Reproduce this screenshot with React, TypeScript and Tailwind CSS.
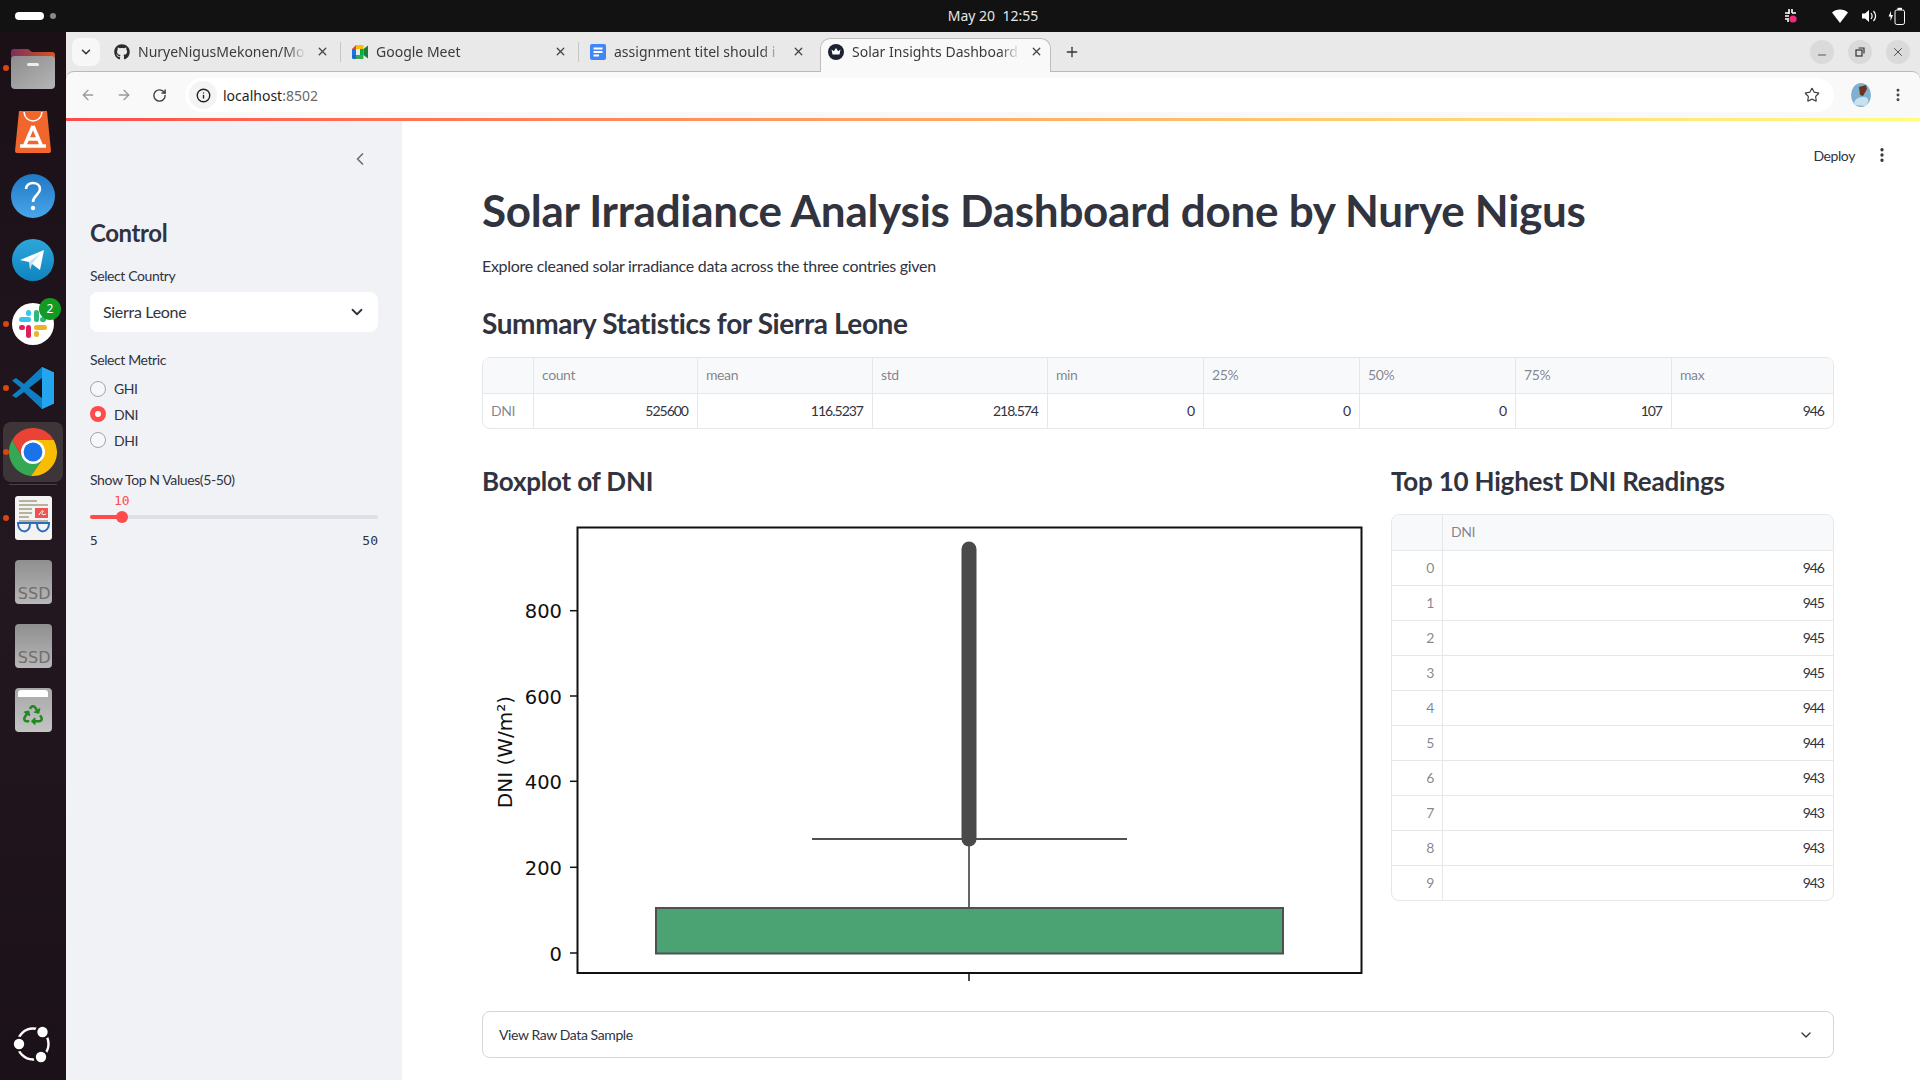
import { ReactNode } from "react";
import { ArrowLeft, ArrowRight, ChevronDown, ChevronLeft, EllipsisVertical, Info, Minus, Plus, RotateCw, Star, X } from "lucide-react";
import { FaGithub, FaRecycle } from "react-icons/fa";

const statCols = [
  { name: "count", value: "525600" },
  { name: "mean", value: "116.5237" },
  { name: "std", value: "218.574" },
  { name: "min", value: "0" },
  { name: "25%", value: "0" },
  { name: "50%", value: "0" },
  { name: "75%", value: "107" },
  { name: "max", value: "946" },
];
const topValues = [946, 945, 945, 945, 944, 944, 943, 943, 943, 943];
const yTicks = [
  { label: "800", y: 100.7, base: 107.7 },
  { label: "600", y: 186, base: 194 },
  { label: "400", y: 271.3, base: 279.3 },
  { label: "200", y: 357.3, base: 365.3 },
  { label: "0", y: 443, base: 451 },
];

const MeetIcon = () => (
  <svg width="16" height="16" viewBox="0 0 16 16">
    <path d="M0 5 L4 1 H4 V5Z" fill="#ea4335" />
    <path d="M4 1 H10.5 a1 1 0 0 1 1 1 V5 H4Z" fill="#fbbc04" />
    <path d="M0 5 H4 V11 H0Z" fill="#1a73e8" />
    <path d="M0 11 H4 V15 H1.5 a1.5 1.5 0 0 1 -1.5 -1.5Z" fill="#1967d2" />
    <path d="M4 11 H11.5 V14 a1 1 0 0 1 -1 1 H4Z" fill="#34a853" />
    <path d="M11.5 5 V11 L16 14.5 V1.5Z" fill="#188038" />
    <path d="M8 5 h3.5 v6 h-3.5z" fill="#00ac47" />
  </svg>
);
const DocsIcon = () => (
  <svg width="16" height="16" viewBox="0 0 16 16">
    <rect width="16" height="16" rx="2" fill="#4285f4" />
    <path d="M3.5 4.5h9M3.5 8h9M3.5 11.5h5.5" stroke="#fff" strokeWidth="1.8" />
  </svg>
);
const CrownIcon = () => (
  <svg width="16" height="16" viewBox="0 0 16 16">
    <circle cx="8" cy="8" r="8" fill="#1d2233" />
    <path d="M3.5 5.5 L5.8 7.2 L8 4 L10.2 7.2 L12.5 5.5 L11.5 10.5 H4.5Z" fill="#fff" />
  </svg>
);
const Chrome = ({ size }: { size: number }) => (
  <svg width={size} height={size} viewBox="0 0 48 48">
    <path d="M3.2 12 A24 24 0 0 1 44.8 12 L24 12 L13.6 30Z" fill="#ea4335" />
    <path d="M3.2 12 A24 24 0 0 0 22 47.9 L34.4 30 H13.6Z" fill="#34a853" />
    <path d="M44.8 12 A24 24 0 0 1 22 47.9 L34.4 30 L24 12Z" fill="#fbbc04" />
    <circle cx="24" cy="24" r="12" fill="#fff" />
    <circle cx="24" cy="24" r="9.4" fill="#1a73e8" />
  </svg>
);
const FolderIcon = () => (
  <svg width="44" height="41" viewBox="0 0 44 41">
    <defs>
      <linearGradient id="folderTop" x1="0" x2="1" y1="0" y2="0">
        <stop offset="0" stopColor="#7b2f5e" />
        <stop offset="1" stopColor="#d9541e" />
      </linearGradient>
      <linearGradient id="folderBody" x1="0" x2="1" y1="0" y2="1">
        <stop offset="0" stopColor="#8d8d8d" />
        <stop offset="1" stopColor="#b5b5b5" />
      </linearGradient>
    </defs>
    <path d="M3 1 H17 L21 4 H41 a3 3 0 0 1 3 3 V16 H0 V4 a3 3 0 0 1 3 -3Z" fill="url(#folderTop)" />
    <rect y="8" width="44" height="33" rx="4" fill="url(#folderBody)" />
    <rect x="16" y="15" width="12" height="3" rx="1.5" fill="#eee" />
  </svg>
);
const StoreIcon = () => (
  <svg width="36" height="42" viewBox="0 0 36 42">
    <path d="M4 0 H32 L36 40 a2 2 0 0 1 -2 2 H2 a2 2 0 0 1 -2 -2Z" fill="#f0662c" />
    <path d="M9 1 C10 13 26 13 27 1" fill="none" stroke="#fff" strokeWidth="1.6" />
    <path d="M18 15 L9 36 M18 15 L27 36 M5 35 H31 M11 28 H25" stroke="#fff" strokeWidth="3.4" fill="none" />
  </svg>
);
const HelpIcon = () => (
  <svg width="44" height="44" viewBox="0 0 44 44">
    <defs>
      <linearGradient id="helpFill" x1="0" x2="0" y1="0" y2="1">
        <stop offset="0" stopColor="#1f78c4" />
        <stop offset="1" stopColor="#4aa6ea" />
      </linearGradient>
    </defs>
    <circle cx="22" cy="22" r="22" fill="url(#helpFill)" />
    <path d="M15 15 C15 7 29 7 29 15 C29 21 22 21 22 28" fill="none" stroke="#fff" strokeWidth="2.6" />
    <circle cx="22" cy="34" r="2.2" fill="#fff" />
  </svg>
);
const TelegramIcon = () => (
  <svg width="42" height="42" viewBox="0 0 42 42">
    <defs>
      <linearGradient id="tgFill" x1="0" x2="0" y1="0" y2="1">
        <stop offset="0" stopColor="#2ea6da" />
        <stop offset="1" stopColor="#0f84c0" />
      </linearGradient>
    </defs>
    <circle cx="21" cy="21" r="21" fill="url(#tgFill)" />
    <path d="M8 21 L32 11 L28 31 L20 25 L17 23Z" fill="#fff" />
    <path d="M17 23 L29 14 L20 25 L18 31Z" fill="#cfe3ef" />
  </svg>
);
const SlackIcon = () => (
  <svg width="42" height="42" viewBox="0 0 42 42">
    <circle cx="21" cy="21" r="21" fill="#fff" />
    <rect x="7" y="14" width="12" height="5" rx="2.5" fill="#36c5f0" />
    <rect x="14" y="7" width="5" height="6" rx="2.5" fill="#36c5f0" />
    <rect x="22" y="7" width="5" height="12" rx="2.5" fill="#2eb67d" />
    <rect x="28" y="14" width="6" height="5" rx="2.5" fill="#2eb67d" />
    <rect x="22" y="22" width="13" height="5" rx="2.5" fill="#ecb22e" />
    <rect x="22" y="28" width="5" height="6" rx="2.5" fill="#ecb22e" />
    <rect x="14" y="22" width="5" height="13" rx="2.5" fill="#e01e5a" />
    <rect x="7" y="22" width="6" height="5" rx="2.5" fill="#e01e5a" />
  </svg>
);
const VsCodeIcon = () => (
  <svg width="42" height="42" viewBox="0 0 42 42">
    <path d="M30 0 L42 5.5 V36.5 L30 42 L12 25 L4 31 L0 28.5 L9 21 L0 13.5 L4 11 L12 17Z" fill="#0f7fc4" />
    <path d="M30 0 L42 5.5 V36.5 L30 42Z" fill="#23a5ef" />
    <path d="M30 11 V31 L17 21Z" fill="#1a1016" />
  </svg>
);
const ReaderIcon = () => (
  <svg width="37" height="44" viewBox="0 0 37 44">
    <rect width="37" height="44" rx="3" fill="#f3f3f3" />
    <path d="M4 5 H22 M4 9 H33 M4 13 H17 M4 17 H17 M4 21 H14 M4 25 H33" stroke="#b8b1a0" strokeWidth="2" />
    <rect x="20" y="12" width="13" height="10" fill="#ef5350" />
    <path d="M24 19 C27 13 30 14 27 17 C26 19 29 19 31 18" stroke="#fff" fill="none" />
    <path d="M2 27 H35 M3 27 C3 38 15 38 15 28 M22 28 C22 38 34 38 34 27" stroke="#2a6bbd" strokeWidth="2" fill="none" />
  </svg>
);
const UbuntuIcon = () => (
  <svg width="40" height="40" viewBox="0 0 40 40">
    <circle cx="20" cy="20" r="15.5" fill="none" stroke="#fff" strokeWidth="2.4" />
    <circle cx="29.5" cy="8" r="7.5" fill="#1b1118" />
    <circle cx="5" cy="20" r="7.5" fill="#1b1118" />
    <circle cx="28" cy="33" r="7.5" fill="#1b1118" />
    <circle cx="29.5" cy="8" r="5.2" fill="#fff" />
    <circle cx="6" cy="20" r="5.2" fill="#fff" />
    <circle cx="28" cy="33" r="5.2" fill="#fff" />
  </svg>
);
const SlackTrayIcon = () => (
  <svg width="14" height="16" viewBox="0 0 14 16">
    <path d="M5 1v5M1 5h4M8 1v4M1 8h4M8 5h4M4 10v4M1 11h2" stroke="#fff" strokeWidth="1.6" />
    <circle cx="9" cy="11" r="3.6" fill="#ee2a7b" />
  </svg>
);
const WifiIcon = () => (
  <svg width="16" height="14" viewBox="0 0 16 14">
    <path d="M0 3.5 C4 -0.5 12 -0.5 16 3.5 L8 14Z" fill="#fff" />
  </svg>
);
const VolumeIcon = () => (
  <svg width="16" height="14" viewBox="0 0 16 14">
    <path d="M1 4.5 H4 L8 1 V13 L4 9.5 H1Z" fill="#fff" />
    <path d="M10 4 C11.5 6 11.5 8 10 10 M12.5 2 C15 5 15 9 12.5 12" stroke="#fff" fill="none" strokeWidth="1.2" />
  </svg>
);
const BatteryIcon = () => (
  <svg width="17" height="18" viewBox="0 0 17 18">
    <path d="M3 4 L0.5 9.5 H2.5 V14 L5 8 H3Z" fill="#fff" />
    <rect x="7" y="3" width="9.5" height="14.5" rx="1.8" fill="none" stroke="#fff" />
    <rect x="9.5" y="0.8" width="4.5" height="2" fill="#fff" />
  </svg>
);
const Avatar = () => (
  <svg width="20" height="24" viewBox="0 0 20 24">
    <ellipse cx="10" cy="12" rx="10" ry="12" fill="#7fb0cf" />
    <path d="M3 22 C3 15 8 14 14 14 C18 15 18 19 15 23Z" fill="#c9e1ee" />
    <path d="M8 4 L15 2 L16 6 L12 13 L9 12Z" fill="#6a3422" />
  </svg>
);

const Dot = () => <span className="absolute left-[3px] top-1/2 -mt-[3px] h-[6px] w-[6px] rounded-full bg-[#d8470f]" />;

const DockSlot = ({ children, running }: { children: ReactNode; running?: boolean }) => (
  <div className="relative flex h-16 w-full items-center justify-center">
    {running && <Dot />}
    {children}
  </div>
);

const SsdIcon = () => (
  <div className="flex h-11 w-[37px] items-end justify-end overflow-hidden rounded-[4px] bg-gradient-to-b from-[#8f8f8f] to-[#b8b8b8] pr-px">
    <span className="text-[16px] leading-[20px] text-[#6f6f6f] font-['DejaVu_Sans',sans-serif]">SSD</span>
  </div>
);

const Dock = () => (
  <div className="flex w-[66px] shrink-0 flex-col items-center bg-gradient-to-b from-[#1a1016] via-[#231720] to-[#1b1118] pt-1">
    <DockSlot running>
      <FolderIcon />
    </DockSlot>
    <DockSlot>
      <StoreIcon />
    </DockSlot>
    <DockSlot>
      <HelpIcon />
    </DockSlot>
    <DockSlot>
      <TelegramIcon />
    </DockSlot>
    <DockSlot running>
      <SlackIcon />
      <span className="absolute right-[5px] top-[6px] flex h-[22px] w-[22px] items-center justify-center rounded-full bg-[#129a22] text-[12px] text-white">
        2
      </span>
    </DockSlot>
    <DockSlot running>
      <VsCodeIcon />
    </DockSlot>
    <DockSlot running>
      <div className="flex h-[60px] w-[60px] items-center justify-center rounded-lg bg-[#3e3539]">
        <Chrome size={48} />
      </div>
    </DockSlot>
    <div className="my-0 h-px w-12 bg-[#4a4045]" />
    <div className="h-px" />
    <DockSlot running>
      <ReaderIcon />
    </DockSlot>
    <DockSlot>
      <SsdIcon />
    </DockSlot>
    <DockSlot>
      <SsdIcon />
    </DockSlot>
    <DockSlot>
      <div className="flex h-11 w-[37px] flex-col items-center rounded-[4px] bg-gradient-to-b from-[#a8a8a8] to-[#c4c4c4]">
        <div className="mt-[2px] h-[7px] w-[30px] rounded-t-[3px] bg-white" />
        <FaRecycle className="mt-[8px] text-[#1f8a1f]" size={20} />
      </div>
    </DockSlot>
    <div className="mt-auto mb-1">
      <DockSlot>
        <UbuntuIcon />
      </DockSlot>
    </div>
  </div>
);

const Tab = ({ icon, title, active, sep }: { icon: ReactNode; title: string; active?: boolean; sep?: boolean }) => (
  <div className="relative flex h-[34px] w-[238px] shrink-0 items-center pb-[7px] pl-[11px]">
    {active && (
      <div className="absolute bottom-0 left-[3px] right-[4px] top-0 z-0 rounded-t-[10px] border border-b-0 border-[#bdbdbd] bg-[#f9f9f9]" />
    )}
    <div className="z-10 flex h-4 w-4 shrink-0 items-center justify-center">{icon}</div>
    <div className="z-10 ml-2 w-[168px] overflow-hidden whitespace-nowrap text-[14px] text-[#3b3b3b] [mask-image:linear-gradient(to_right,black_88%,transparent)]">
      {title}
    </div>
    <X size={13} strokeWidth={2.4} className="z-10 ml-[10px] shrink-0 text-[#444]" />
    {sep && <div className="absolute right-0 top-[4px] h-5 w-px bg-[#c6c6c6]" />}
  </div>
);

const WinButton = ({ children }: { children: ReactNode }) => (
  <div className="flex h-6 w-6 items-center justify-center rounded-full bg-[#dadada] text-[#333]">{children}</div>
);

const Browser = () => (
  <div className="flex flex-1 flex-col overflow-hidden bg-[#e9e9e9]">
    <div className="flex h-[39px] shrink-0 pt-[6px]">
      <div className="ml-[6px] flex h-7 w-7 items-center justify-center rounded-lg bg-[#f7f7f7]">
        <ChevronDown size={14} strokeWidth={2.6} className="text-[#333]" />
      </div>
      <div className="ml-[3px] flex h-[34px]">
        <Tab icon={<FaGithub size={16} className="text-[#2b2b2b]" />} title="NuryeNigusMekonen/Mo" sep />
        <Tab icon={<MeetIcon />} title="Google Meet" sep />
        <Tab icon={<DocsIcon />} title="assignment titel should i" />
        <div className="z-10">
          <Tab icon={<CrownIcon />} title="Solar Insights Dashboard" active />
        </div>
      </div>
      <Plus size={16} strokeWidth={2} className="ml-[9px] mt-[6px] text-[#333]" />
      <div className="ml-auto mr-[10px] mt-[2px] flex gap-[14px] self-start">
        <WinButton>
          <Minus size={12} strokeWidth={1.6} className="mt-[5px]" />
        </WinButton>
        <WinButton>
          <svg width="10" height="10" viewBox="0 0 10 10" fill="none" stroke="#333" strokeWidth="1.2">
            <rect x="1" y="3" width="6" height="6" />
            <path d="M3.5 1H9V6.5" />
          </svg>
        </WinButton>
        <WinButton>
          <X size={14} strokeWidth={1.4} />
        </WinButton>
      </div>
    </div>
    <div className="flex h-[47px] shrink-0 items-start rounded-t-lg border-t border-[#b9b9b9] bg-[#f9f9f9] pt-[6px]">
      <div className="flex h-[34px] items-center pl-[14px] text-[#9b9b9b]">
        <ArrowLeft size={16} />
        <ArrowRight size={16} className="ml-5" />
        <RotateCw size={15} strokeWidth={2.2} className="ml-5 text-[#3d3d3d]" />
      </div>
      <div className="ml-[18px] flex h-[34px] w-[1649px] items-center rounded-full bg-white pl-[4px]">
        <div className="flex h-7 w-7 items-center justify-center rounded-full bg-[#f4f4f4]">
          <Info size={15} strokeWidth={2.2} className="text-[#222]" />
        </div>
        <span className="ml-[6px] text-[14px] text-[#1f1f1f]">
          localhost<span className="text-[#6a6a6a]">:8502</span>
        </span>
        <Star size={16} strokeWidth={1.8} className="ml-auto mr-[14px] text-[#444]" />
      </div>
      <div className="ml-[17px] flex h-[34px] items-center">
        <Avatar />
        <EllipsisVertical size={16} strokeWidth={2.4} className="ml-[19px] text-[#444]" />
      </div>
    </div>
    <div className="h-[3px] shrink-0 bg-gradient-to-r from-[#ff4b4b] to-[#fffd80]" />
    <div className="flex min-h-0 flex-1 font-['Lato','Liberation_Sans',sans-serif] tracking-[-0.4px]">
      <Sidebar />
      <Main />
    </div>
  </div>
);

const Radio = ({ label, checked }: { label: string; checked?: boolean }) => (
  <div className="flex h-[25.67px] items-center gap-2">
    {checked ? (
      <span className="flex h-4 w-4 items-center justify-center rounded-full bg-[#ff4b4b]">
        <span className="h-[6px] w-[6px] rounded-full bg-white" />
      </span>
    ) : (
      <span className="h-4 w-4 rounded-full border border-[#a3a4aa] bg-[#f6f7fa]" />
    )}
    <span>{label}</span>
  </div>
);

const Sidebar = () => {
  const pct = ((10 - 5) / (50 - 5)) * 100;
  return (
    <div className="flex w-[336px] shrink-0 flex-col bg-[#f0f2f6] px-6 text-[14px] text-[#31333f]">
      <div className="flex h-[94px] justify-end pr-2 pt-[28px]">
        <ChevronLeft size={20} strokeWidth={2} className="text-[#6b6d76]" />
      </div>
      <div className="text-[24px] font-bold leading-[36px]">Control</div>
      <div className="mt-[15px] leading-5">Select Country</div>
      <div className="mt-[6px] flex h-10 items-center justify-between rounded-lg bg-white pl-[13px] pr-[12px] text-[16px] tracking-[-0.3px]">
        <span>Sierra Leone</span>
        <ChevronDown size={18} strokeWidth={2.4} />
      </div>
      <div className="mt-[18px] leading-5">Select Metric</div>
      <div className="mt-[6px]">
        <Radio label="GHI" />
        <Radio label="DNI" checked />
        <Radio label="DHI" />
      </div>
      <div className="mt-[17px] leading-5">Show Top N Values(5-50)</div>
      <div className="relative h-10">
        <div className="absolute left-0 right-0 top-[25px] h-1 rounded-full bg-[#dcdfe8]" />
        <div className="absolute left-0 top-[25px] h-1 rounded-l-full bg-[#ff4b4b]" style={{ width: `${pct}%` }} />
        <div
          className="absolute top-[21px] -ml-[6px] h-3 w-3 rounded-full bg-[#ff4b4b]"
          style={{ left: `${pct}%` }}
        />
        <div
          className="absolute top-[3px] -ml-2 font-['DejaVu_Sans_Mono',monospace] text-[13px] leading-4 tracking-normal text-[#ff4b4b]"
          style={{ left: `${pct}%` }}
        >
          10
        </div>
      </div>
      <div className="mt-px flex justify-between font-['DejaVu_Sans_Mono',monospace] text-[13px] leading-5 tracking-normal">
        <span>5</span>
        <span>50</span>
      </div>
    </div>
  );
};

const headCell = "flex h-[35px] items-center border-l border-[#e6e7ea] bg-[#f8f9fb] px-2 pb-[2px] text-[rgba(49,51,63,0.6)]";
const bodyCell = "flex h-[35px] items-center border-l border-t border-[#e6e7ea] pl-2 pr-[9px] pb-[2px] tracking-[-1px]";

const StatsTable = () => (
  <div className="grid grid-cols-[50px_164px_175px_175px_156px_156px_156px_156px_1fr] overflow-hidden rounded-lg border border-[#e6e7ea] text-[14px]">
    <div className="h-[35px] bg-[#f8f9fb]" />
    {statCols.map((col) => (
      <div key={col.name} className={headCell}>
        {col.name}
      </div>
    ))}
    <div className="flex h-[35px] items-center border-t border-[#e6e7ea] px-2 pb-[2px] text-[rgba(49,51,63,0.6)]">DNI</div>
    {statCols.map((col) => (
      <div key={col.name} className={`${bodyCell} justify-end`}>
        {col.value}
      </div>
    ))}
  </div>
);

const TopTable = () => (
  <div className="grid grid-cols-[50px_1fr] overflow-hidden rounded-lg border border-[#e6e7ea] text-[14px]">
    <div className="h-[35px] bg-[#f8f9fb]" />
    <div className={headCell}>DNI</div>
    {topValues.map((value, i) => (
      <div key={i} className="contents">
        <div className="flex h-[35px] items-center justify-end border-t border-[#e6e7ea] px-2 pb-[2px] text-[rgba(49,51,63,0.6)]">
          {i}
        </div>
        <div className={`${bodyCell} justify-end`}>{value}</div>
      </div>
    ))}
  </div>
);

const BoxPlot = () => (
  <svg width="885" height="490" viewBox="0 0 885 490" className="mt-2 block font-['DejaVu_Sans',sans-serif] tracking-normal">
    <rect x="95.5" y="17.5" width="784" height="445.5" fill="#fff" stroke="#111" strokeWidth="2" />
    {yTicks.map((t) => (
      <g key={t.label}>
        <line x1="88" x2="95" y1={t.y} y2={t.y} stroke="#111" strokeWidth="1.5" />
        <text x="80" y={t.base} textAnchor="end" fontSize="19.5" fill="#111">
          {t.label}
        </text>
      </g>
    ))}
    <text transform="translate(30 242) rotate(-90)" textAnchor="middle" fontSize="20" fill="#111">
      DNI (W/m²)
    </text>
    <line x1="487" x2="487" y1="464" y2="471" stroke="#111" strokeWidth="1.5" />
    <line x1="487" x2="487" y1="329" y2="398" stroke="#555" strokeWidth="1.8" />
    <line x1="330" x2="645" y1="329" y2="329" stroke="#505050" strokeWidth="2" />
    <line x1="487" x2="487" y1="39" y2="329" stroke="#4a4a4a" strokeWidth="15" strokeLinecap="round" />
    <rect x="174" y="398" width="627" height="45.5" fill="#4ba374" stroke="#505050" strokeWidth="2" />
  </svg>
);

const Main = () => (
  <div className="flex min-w-0 flex-1 flex-col bg-white pl-20 pr-[86px] text-[#31333f]">
    <div className="-mr-[86px] flex h-[68px] shrink-0 items-center justify-end pr-[29px] text-[14px]">
      <span>Deploy</span>
      <EllipsisVertical size={18} strokeWidth={2.4} className="ml-[18px]" />
    </div>
    <h1 className="mt-[-9px] text-[44px] font-bold leading-[60px] tracking-[-0.27px]">Solar Irradiance Analysis Dashboard done by Nurye Nigus</h1>
    <p className="mt-[14px] text-[16px] leading-6 tracking-[-0.3px]">Explore cleaned solar irradiance data across the three contries given</p>
    <h2 className="mt-[25px] text-[28px] font-bold leading-10 tracking-[-0.4px]">Summary Statistics for Sierra Leone</h2>
    <div className="mt-[14px]">
      <StatsTable />
    </div>
    <div className="mt-[33px] flex gap-6">
      <div className="w-[885px] shrink-0">
        <h2 className="h-10 text-[26px] font-bold leading-[38px] tracking-[-0.2px]">Boxplot of DNI</h2>
        <BoxPlot />
      </div>
      <div className="min-w-0 flex-1">
        <h2 className="h-10 text-[26px] font-bold leading-[38px] tracking-[-0.2px]">Top 10 Highest DNI Readings</h2>
        <div className="mt-3">
          <TopTable />
        </div>
      </div>
    </div>
    <div className="mt-[11px] flex h-[47px] shrink-0 items-center justify-between rounded-lg border border-[#d6d6d9] pl-4 pr-[19px] text-[14px]">
      <span>View Raw Data Sample</span>
      <ChevronDown size={16} strokeWidth={2} />
    </div>
  </div>
);

export default function App() {
  return (
    <div className="flex h-[1080px] w-[1920px] flex-col overflow-hidden bg-[#121212] font-['Noto_Sans','Liberation_Sans',sans-serif]">
      <div className="relative flex h-8 shrink-0 items-center">
        <div className="ml-[15px] h-2 w-[29px] rounded-full bg-white" />
        <div className="ml-[6px] h-[6px] w-[6px] rounded-full bg-[#8a8a8a]" />
        <div className="absolute left-[66px] right-0 -mt-[2px] text-center text-[14px] text-[#e6e6e6]">May 20&nbsp;&nbsp;12:55</div>
        <div className="ml-auto mr-[15px] flex items-center">
          <SlackTrayIcon />
          <div className="ml-[34px]">
            <WifiIcon />
          </div>
          <div className="ml-[13px]">
            <VolumeIcon />
          </div>
          <div className="ml-[11px]">
            <BatteryIcon />
          </div>
        </div>
      </div>
      <div className="flex min-h-0 flex-1">
        <Dock />
        <Browser />
      </div>
    </div>
  );
}
